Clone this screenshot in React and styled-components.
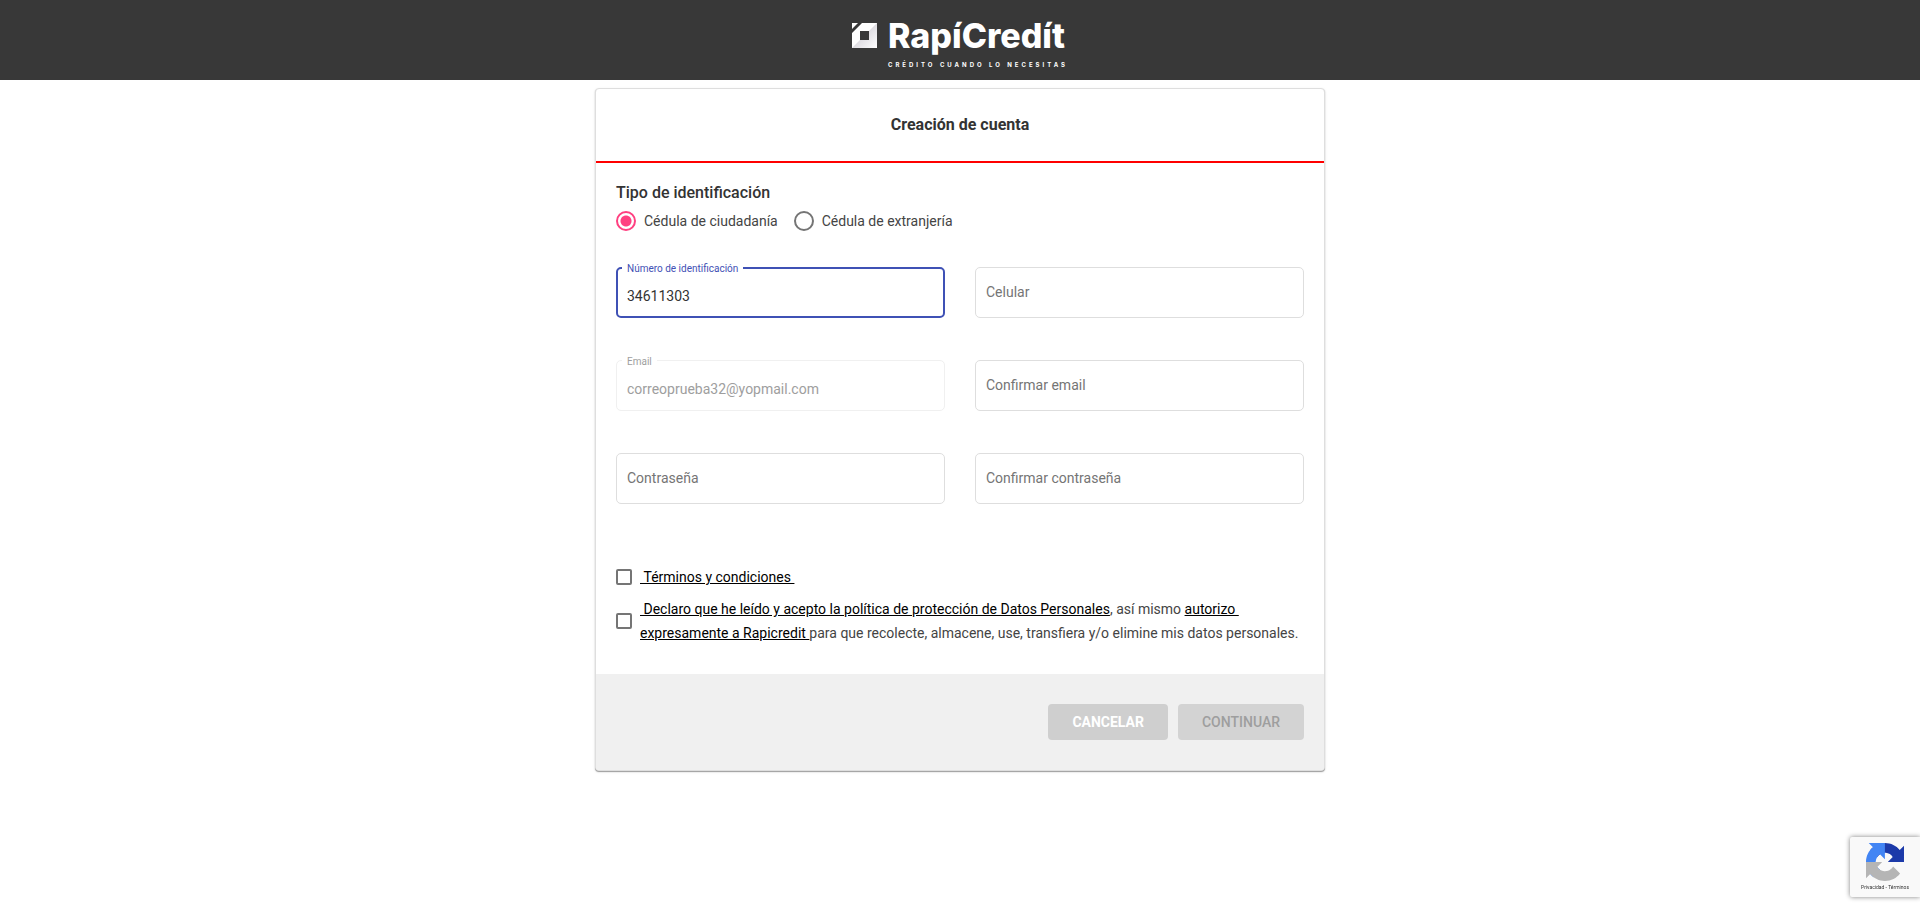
import React, { useState } from "react";
import styled, { createGlobalStyle } from "styled-components";

const GlobalStyle = createGlobalStyle`
  *, *::before, *::after { box-sizing: border-box; }
  body {
    margin: 0;
    background: #fff;
    color: #444;
    font: 400 14px/24px Roboto, "Liberation Sans", sans-serif;
  }
`;

const TopBar = styled.header`
  display: flex;
  justify-content: center;
  height: 80px;
  padding: 16px;
  background: #383838;
`;

const Brand = styled.a`
  display: flex;
  align-items: flex-start;
  gap: 10px;
  color: #fff;
  text-decoration: none;
`;

const BrandMark = styled.svg`
  width: 26px;
  height: 26px;
  margin-top: 7px;
`;

const BrandText = styled.span`
  display: flex;
  flex-direction: column;
  gap: 5px;
`;

const BrandName = styled.span`
  font: 800 34px/40px Inter, "Liberation Sans", sans-serif;
`;

const Tagline = styled.span`
  font: 700 6px/8px Inter, "Liberation Sans", sans-serif;
  letter-spacing: 3px;
  text-transform: uppercase;
`;

const Main = styled.main`
  padding: 8px 16px;
`;

const Card = styled.form`
  max-width: 730px;
  margin: 0 auto;
  border: 1px solid #dedede;
  border-radius: 4px;
  background: #fff;
  box-shadow: 0 1px 1px rgba(0, 0, 0, 0.34), 0 1px 3px rgba(0, 0, 0, 0.1);
  overflow: hidden;
`;

const CardHeader = styled.div`
  padding: 24px 20px;
  border-bottom: 2px solid #f00;
  text-align: center;
`;

const Title = styled.h1`
  margin: 0;
  color: #333;
  font-size: 16px;
  font-weight: 700;
  line-height: 24px;
`;

const CardBody = styled.div`
  padding: 18px 20px 29px;
`;

const RadioGroup = styled.fieldset`
  display: flex;
  gap: 16px;
  margin: 0 0 34px;
  padding: 0;
  border: 0;
`;

const GroupLabel = styled.legend`
  padding: 0 0 4px;
  color: #333;
  font-size: 16px;
  font-weight: 500;
  line-height: 24px;
`;

const Choice = styled.label`
  display: flex;
  align-items: center;
  gap: 8px;
`;

const Radio = styled.input`
  appearance: none;
  width: 20px;
  height: 20px;
  margin: 0;
  border: 2px solid #757575;
  border-radius: 50%;

  &:checked {
    border-color: #ff4081;
    background: radial-gradient(circle, #ff4081 5px, transparent 6px);
  }
`;

const Fields = styled.div`
  display: grid;
  grid-template-columns: 1fr 1fr;
  gap: 42px 30px;
  margin-bottom: 61px;
`;

const Field = styled.div`
  position: relative;
`;

const FieldInput = styled.input`
  display: block;
  width: 100%;
  height: 51px;
  padding: 6px 10px 0;
  border: ${(p) => (p.$active ? "2px solid #3f51b5" : "1px solid #dedede")};
  padding-left: ${(p) => (p.$active ? "9px" : "10px")};
  border-radius: 5px;
  outline: 0;
  background: #fff;
  color: #333;
  font: inherit;

  &:disabled {
    border-color: #f0f0f0;
    color: #9e9e9e;
  }
`;

const FieldLabel = styled.label`
  position: absolute;
  top: ${(p) => (p.$floating ? "-5px" : "13px")};
  left: 6px;
  padding: 0 5px;
  background: #fff;
  color: ${(p) => (p.$active ? "#3f51b5" : p.$muted ? "#9e9e9e" : "#757575")};
  font-size: ${(p) => (p.$floating ? "10px" : "14px")};
  line-height: ${(p) => (p.$floating ? "14px" : "24px")};
`;

const Consents = styled.div`
  display: flex;
  flex-direction: column;
  gap: 8px;
`;

const Consent = styled.div`
  display: flex;
  align-items: center;
  gap: 8px;
`;

const Checkbox = styled.input`
  appearance: none;
  flex: none;
  width: 16px;
  height: 16px;
  margin: 0;
  border: 2px solid #757575;
  border-radius: 2px;

  &:checked { background: #ff4081; border-color: #ff4081; }
`;

const TextLink = styled.a`
  color: #000;
  text-decoration: underline;
`;

const CardFooter = styled.div`
  display: flex;
  justify-content: flex-end;
  gap: 10px;
  padding: 30px 20px;
  background: #f0f0f0;
`;

const Button = styled.button`
  height: 36px;
  padding: 0 24px;
  border: 0;
  border-radius: 4px;
  background: ${(p) => (p.$primary ? "#d3d3d3" : "#cfcfcf")};
  color: ${(p) => (p.$primary ? "#9e9e9e" : "#fff")};
  font: inherit;
  font-weight: ${(p) => (p.$primary ? 500 : 700)};
  text-transform: uppercase;
`;

const CaptchaBadge = styled.aside`
  position: fixed;
  right: 0;
  bottom: 14px;
  display: flex;
  flex-direction: column;
  align-items: center;
  gap: 2px;
  width: 70px;
  height: 60px;
  padding: 6px 8px 0;
  border-radius: 2px 0 0 2px;
  background: #f9f9f9;
  box-shadow: 0 0 5px gray;
`;

const CaptchaMark = styled.svg`
  width: 38px;
  height: 38px;
`;

const CaptchaLinks = styled.div`
  color: #333;
  font-size: 5px;
  line-height: 8px;
  white-space: nowrap;

  a { color: inherit; text-decoration: none; }
`;

const FIELDS = [
  { id: "document", label: "Número de identificación", value: "34611303", active: true },
  { id: "phone", label: "Celular", type: "tel" },
  { id: "email", label: "Email", value: "correoprueba32@yopmail.com", disabled: true, type: "email" },
  { id: "email-confirm", label: "Confirmar email", type: "email" },
  { id: "password", label: "Contraseña", type: "password" },
  { id: "password-confirm", label: "Confirmar contraseña", type: "password" },
];

function OutlinedField({ id, label, value: initial = "", type = "text", active, disabled }) {
  const [value, setValue] = useState(initial);
  return (
    <Field>
      <FieldInput
        id={id}
        type={type}
        value={value}
        disabled={disabled}
        $active={active}
        onChange={(e) => setValue(e.target.value)}
      />
      <FieldLabel htmlFor={id} $floating={value !== ""} $active={active} $muted={disabled}>
        {label}
      </FieldLabel>
    </Field>
  );
}

function Logo() {
  return (
    <Brand href="#">
      <BrandMark viewBox="0 0 26 26" aria-hidden="true">
        <defs>
          <linearGradient id="fold" x1="0.5" y1="0.5" x2="1" y2="1">
            <stop offset="0" stopColor="#dfdde2" />
            <stop offset="1" stopColor="#fff" />
          </linearGradient>
        </defs>
        <path d="M10 0H25V25H0V10Z M8 8V17H17V8Z" fill="#fff" fillRule="evenodd" />
        <path d="M25 0V25H0L8 17H17V8Z" fill="url(#fold)" />
        <path d="M0 0H6L0 6Z" fill="#fff" />
      </BrandMark>
      <BrandText>
        <BrandName>RapíCredít</BrandName>
        <Tagline>Crédito cuando lo necesitas</Tagline>
      </BrandText>
    </Brand>
  );
}

export default function App() {
  const [kind, setKind] = useState("ciudadania");
  return (
    <>
      <GlobalStyle />
      <TopBar>
        <Logo />
      </TopBar>
      <Main>
        <Card onSubmit={(e) => e.preventDefault()}>
          <CardHeader>
            <Title>Creación de cuenta</Title>
          </CardHeader>
          <CardBody>
            <RadioGroup>
              <GroupLabel>Tipo de identificación</GroupLabel>
              <Choice>
                <Radio type="radio" name="kind" checked={kind === "ciudadania"} onChange={() => setKind("ciudadania")} />
                Cédula de ciudadanía
              </Choice>
              <Choice>
                <Radio type="radio" name="kind" checked={kind === "extranjeria"} onChange={() => setKind("extranjeria")} />
                Cédula de extranjería
              </Choice>
            </RadioGroup>
            <Fields>
              {FIELDS.map((field) => (
                <OutlinedField key={field.id} {...field} />
              ))}
            </Fields>
            <Consents>
              <Consent>
                <Checkbox type="checkbox" id="terms" />
                <label htmlFor="terms">
                  <TextLink href="#">&nbsp;Términos y condiciones&nbsp;</TextLink>
                </label>
              </Consent>
              <Consent>
                <Checkbox type="checkbox" id="privacy" />
                <label htmlFor="privacy">
                  <TextLink href="#">
                    &nbsp;Declaro que he leído y acepto la política de protección de Datos Personales
                  </TextLink>
                  , así mismo <TextLink href="#">autorizo&nbsp; expresamente a Rapicredit </TextLink>
                  para que recolecte, almacene, use, transfiera y/o elimine mis datos personales.
                </label>
              </Consent>
            </Consents>
          </CardBody>
          <CardFooter>
            <Button type="button">Cancelar</Button>
            <Button type="submit" disabled $primary>
              Continuar
            </Button>
          </CardFooter>
        </Card>
      </Main>
      <CaptchaBadge>
        <CaptchaMark viewBox="0 0 64 64" aria-hidden="true">
          <path
            fill="#1c3aa9"
            d="M64 31.955l-.033-1.37V4.687l-7.16 7.16C50.948 4.674 42.033.093 32.05.093c-10.4 0-19.622 4.96-25.458 12.64l11.736 11.86a15.55 15.55 0 0 1 4.754-5.334c2.05-1.6 4.952-2.906 8.968-2.906.485 0 .86.057 1.135.163 4.976.393 9.288 3.14 11.828 7.124l-8.307 8.307L64 31.953"
          />
          <path
            fill="#4285f4"
            d="M31.862.094l-1.37.033H4.594l7.16 7.16C4.58 13.147 0 22.06 0 32.046c0 10.4 4.96 19.622 12.64 25.458L24.5 45.768a15.55 15.55 0 0 1-5.334-4.754c-1.6-2.05-2.906-4.952-2.906-8.968 0-.485.057-.86.163-1.135.393-4.976 3.14-9.288 7.124-11.828l8.307 8.307L31.86.095"
          />
          <path
            fill="#b5b5b5"
            d="M.001 32.045l.033 1.37v25.898l7.16-7.16c5.86 7.173 14.774 11.754 24.76 11.754 10.4 0 19.622-4.96 25.458-12.64l-11.736-11.86a15.55 15.55 0 0 1-4.754 5.334c-2.05 1.6-4.952 2.906-8.968 2.906-.485 0-.86-.057-1.135-.163-4.976-.393-9.288-3.14-11.828-7.124l8.307-8.307c-10.522.04-22.4.066-27.295-.005"
          />
        </CaptchaMark>
        <CaptchaLinks>
          <a href="#">Privacidad</a> - <a href="#">Términos</a>
        </CaptchaLinks>
      </CaptchaBadge>
    </>
  );
}
